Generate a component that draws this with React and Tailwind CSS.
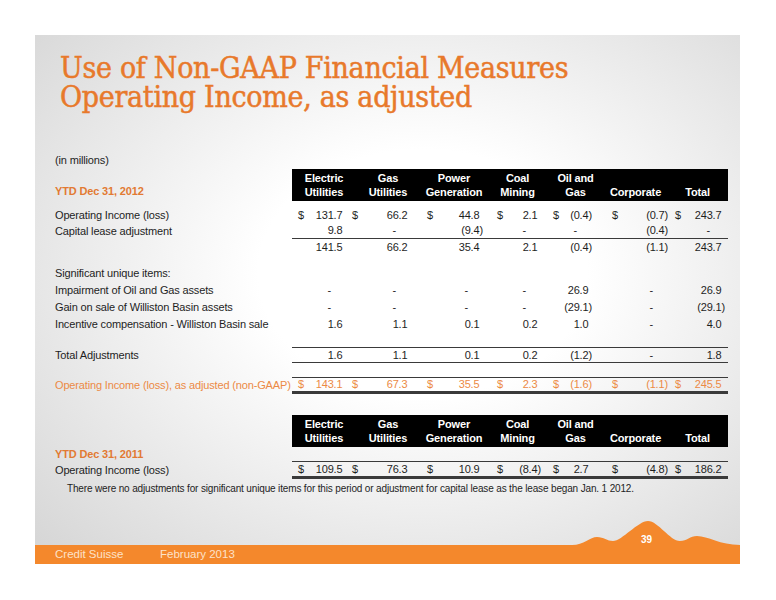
import React from "react";

const SANS = "font-['Liberation_Sans',Arial,sans-serif]";

const HEAD_W = ["w-[64px]", "w-[64px]", "w-[68px]", "w-[59px]", "w-[57px]", "w-[63px]", "w-[61px]"];
const HEADS = [
  ["Electric", "Utilities"],
  ["Gas", "Utilities"],
  ["Power", "Generation"],
  ["Coal", "Mining"],
  ["Oil and", "Gas"],
  ["", "Corporate"],
  ["", "Total"],
];

const COLS = [
  "ml-[6px] w-[48px]",
  "ml-[6px] w-[59px]",
  "ml-[16px] w-[56px]",
  "ml-[14px] w-[44px]",
  "ml-[12px] w-[39px]",
  "ml-[20px] w-[56px]",
  "ml-[7px] w-[50px]",
];

function padFor(v) {
  if (v === "-") return "pr-[15px]";
  if (v.startsWith("(")) return "";
  return "pr-[3.5px]";
}

function Header({ label }) {
  return (
    <div className="flex h-[32px]">
      <div className="w-[237px] flex items-end pb-[2px] text-[#e27a33] font-bold">{label}</div>
      <div className="flex bg-black text-white font-bold leading-[14px] items-center">
        {HEADS.map((h, i) => (
          <div key={i} className={`${HEAD_W[i]} flex flex-col items-center`}>
            <span className="h-[14px]">{h[0]}</span>
            <span className="h-[14px]">{h[1]}</span>
          </div>
        ))}
      </div>
    </div>
  );
}

function Row({ label, values, dollar, rowCls = "h-[16px]", lineCls = "", labelCls = "" }) {
  return (
    <div className={`flex ${rowCls}`}>
      <div className={`w-[237px] flex items-center whitespace-nowrap ${labelCls}`}>{label}</div>
      {values && (
        <div className={`w-[436px] flex items-center ${lineCls}`}>
          {values.map((v, i) => (
            <div key={i} className={`${COLS[i]} flex justify-between`}>
              <span>{dollar ? "$" : ""}</span>
              <span className={padFor(v)}>{v}</span>
            </div>
          ))}
        </div>
      )}
    </div>
  );
}

export default function App() {
  return (
    <div className="w-[776px] h-[600px] bg-white pt-[35px] pl-[35px]">
      <div className="w-[705px] h-[529px] flex flex-col bg-[radial-gradient(ellipse_at_55%_45%,#ffffff_30%,#d4d4d4_100%)]">
        <h1 className="pl-[25px] pt-[18px] text-[30px] leading-[29px] text-[#e8792b] [-webkit-text-stroke:0.5px_#e8792b] font-['DejaVu_Serif_Condensed','DejaVu_Serif',serif] tracking-[-0.3px]">
          <div>Use of Non-GAAP Financial Measures</div>
          <div>Operating Income, as adjusted</div>
        </h1>

        <div className={`${SANS} text-[11px] tracking-[-0.15px] text-[#1e1e1e] pl-[20px] mt-[41px]`}>
          <div className="h-[16px] leading-[16px]">(in millions)</div>
          <div className="mt-[1px]">
            <Header label="YTD Dec 31, 2012" />
          </div>
          <div className="mt-[6px]">
            <Row
              label="Operating Income (loss)"
              dollar
              values={["131.7", "66.2", "44.8", "2.1", "(0.4)", "(0.7)", "243.7"]}
            />
            <Row
              label="Capital lease adjustment"
              values={["9.8", "-", "(9.4)", "-", "-", "(0.4)", "-"]}
              lineCls="h-full border-b border-[#3a3a3a]"
            />
            <Row
              label=""
              rowCls="h-[17px]"
              values={["141.5", "66.2", "35.4", "2.1", "(0.4)", "(1.1)", "243.7"]}
            />
          </div>
          <div className="mt-[9px]">
            <Row label="Significant unique items:" rowCls="h-[17px]" />
            <Row
              label="Impairment of Oil and Gas assets"
              rowCls="h-[17px]"
              values={["-", "-", "-", "-", "26.9", "-", "26.9"]}
            />
            <Row
              label="Gain on sale of Williston Basin assets"
              rowCls="h-[17px]"
              values={["-", "-", "-", "-", "(29.1)", "-", "(29.1)"]}
            />
            <Row
              label="Incentive compensation - Williston Basin sale"
              values={["1.6", "1.1", "0.1", "0.2", "1.0", "-", "4.0"]}
            />
          </div>
          <div className="mt-[15px]">
            <Row
              label="Total Adjustments"
              values={["1.6", "1.1", "0.1", "0.2", "(1.2)", "-", "1.8"]}
              lineCls="h-full border-y border-[#3a3a3a]"
            />
          </div>
          <div className="mt-[14px] text-[#ec8a45]">
            <Row
              label="Operating Income (loss), as adjusted (non-GAAP)"
              dollar
              rowCls="h-[17px]"
              values={["143.1", "67.3", "35.5", "2.3", "(1.6)", "(1.1)", "245.5"]}
              lineCls="h-full border-t border-b-[3px] border-b-double border-[#3a3a3a]"
            />
          </div>

          <div className="mt-[21px]">
            <Header label="" />
          </div>
          <div className="h-[14px] flex items-center text-[#e27a33] font-bold">YTD Dec 31, 2011</div>
          <Row
            label="Operating Income (loss)"
            dollar
            rowCls="h-[18px]"
            values={["109.5", "76.3", "10.9", "(8.4)", "2.7", "(4.8)", "186.2"]}
            lineCls="h-full border-t border-b-[3px] border-b-double border-[#3a3a3a]"
          />
          <div className="h-[14px] mt-[2px] flex items-center pl-[12px] text-[10px]">
            There were no adjustments for significant unique items for this period or adjustment for capital lease as the lease began Jan. 1 2012.
          </div>
        </div>

        <div className="mt-auto flex flex-col">
          <div className="relative self-end w-[180px] h-[30px]">
            <svg width="180" height="30" viewBox="0 0 180 30" className="block">
              <path
                d="M0,30 L12,30 C24,30 30,22 37,22 C44,22 47,26 53,26 C62,26 78,6 88,6 C98,6 110,26 120,26 C127,26 130,21 137,21 C148,21 160,30 180,30 Z"
                fill="#f4882c"
              />
            </svg>
            <span className={`${SANS} absolute left-[81px] top-[20px] text-[10px] leading-[10px] font-bold text-white`}>39</span>
          </div>
          <div className={`${SANS} h-[19px] bg-[#f4882c] flex items-center text-[11.5px] text-[#fde2c9] pl-[20px]`}>
            <span className="w-[105px]">Credit Suisse</span>
            <span>February 2013</span>
          </div>
        </div>
      </div>
    </div>
  );
}
